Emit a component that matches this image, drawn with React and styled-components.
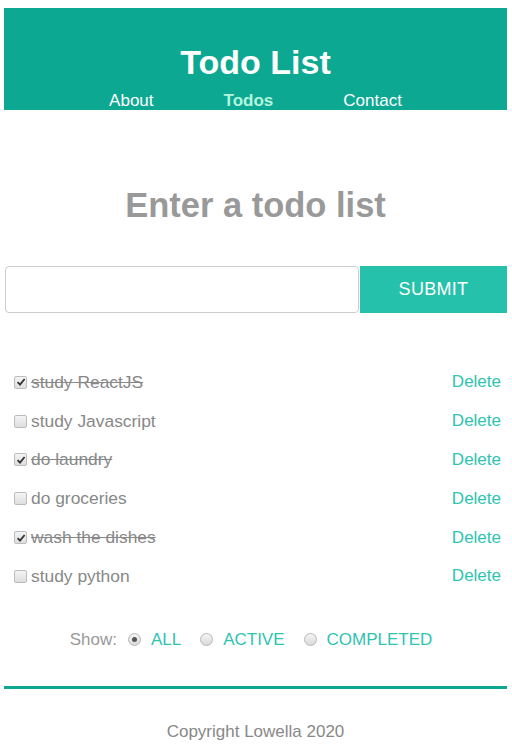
import React, { useState } from 'react';
import styled, { createGlobalStyle } from 'styled-components';

const GlobalStyle = createGlobalStyle`
  body {
    margin: 0;
    background: #fff;
    font-family: "Liberation Sans", Arial, sans-serif;
  }
`;

const Page = styled.div`
  padding: 8px 5px 0 4px;
`;

const Header = styled.header`
  height: 102px;
  background: #0ca892;
  display: flex;
  flex-direction: column;
  align-items: center;
`;

const Title = styled.h1`
  margin: 34px 0 0;
  font-size: 34px;
  line-height: 40px;
  font-weight: 700;
  color: #fff;
`;

const Nav = styled.nav`
  margin-top: 9px;
  display: flex;
  gap: 70px;
  > a {
    font-size: 17px;
    line-height: 20px;
    color: #fff;
    text-decoration: none;
  }
  > a.active {
    font-weight: 700;
    color: #b5f5dd;
  }
`;

const Heading = styled.h2`
  margin: 75px 0 0;
  text-align: center;
  font-size: 34.5px;
  line-height: 40px;
  font-weight: 700;
  color: #999;
`;

const Form = styled.form`
  margin-top: 41px;
  display: flex;
  height: 47px;
`;

const Input = styled.input`
  flex: 1;
  margin: 0 1px 0 1px;
  border: 1px solid #ccc;
  border-radius: 4px;
  font-size: 17px;
  padding: 0 10px;
  outline: none;
`;

const Submit = styled.button`
  width: 147px;
  border: none;
  background: #25c1aa;
  color: #fff;
  font-family: inherit;
  font-size: 18px;
  letter-spacing: 0.3px;
`;

const List = styled.ul`
  list-style: none;
  margin: 50px 0 0;
  padding: 0 6px 0 6px;
`;

const Row = styled.li`
  height: 38.8px;
  display: flex;
  align-items: center;
  font-size: 17.4px;
  color: #888;
`;

const Box = styled.span`
  width: 13px;
  height: 13px;
  margin: 0 4px 0 4px;
  box-sizing: border-box;
  border: 1px solid #bcbcbc;
  border-radius: 2px;
  background: linear-gradient(#f4f4f4, #dedede);
  display: flex;
  align-items: center;
  justify-content: center;
  flex-shrink: 0;
`;

const Label = styled.span`
  flex: 1;
  text-decoration: ${p => (p.$done ? 'line-through' : 'none')};
`;

const DeleteBtn = styled.span`
  color: #2ec4b0;
  font-size: 17px;
  cursor: pointer;
`;

const Filters = styled.div`
  margin-top: 34px;
  display: flex;
  justify-content: center;
  align-items: center;
  font-size: 17px;
  line-height: 20px;
  padding-right: 9px;
  > .show {
    color: #999;
    margin-right: 11px;
  }
`;

const Radio = styled.span`
  width: 13px;
  height: 13px;
  box-sizing: border-box;
  border-radius: 50%;
  border: 1px solid #b8b8b8;
  background: linear-gradient(#f4f4f4, #dadada);
  display: flex;
  align-items: center;
  justify-content: center;
  margin-right: 10px;
  > i {
    width: 5px;
    height: 5px;
    border-radius: 50%;
    background: #555;
  }
`;

const FilterLabel = styled.span`
  color: #2ec4b0;
  margin-right: 19px;
  &:last-child {
    margin-right: 0;
  }
`;

const Rule = styled.hr`
  margin: 36px 0 0;
  border: none;
  height: 3px;
  background: #0ca892;
`;

const Footer = styled.footer`
  margin-top: 33px;
  text-align: center;
  font-size: 17px;
  line-height: 20px;
  color: #888;
`;

const Check = () => (
  <svg width="10" height="10" viewBox="0 0 10 10">
    <path d="M1.6 5.2 L4 7.6 L8.6 2" fill="none" stroke="#333" strokeWidth="1.8" />
  </svg>
);

const todos = [
  { text: 'study ReactJS', done: true },
  { text: 'study Javascript', done: false },
  { text: 'do laundry', done: true },
  { text: 'do groceries', done: false },
  { text: 'wash the dishes', done: true },
  { text: 'study python', done: false },
];

const App = () => {
  const [filter] = useState('ALL');
  return (
    <Page>
      <GlobalStyle />
      <Header>
        <Title>Todo List</Title>
        <Nav>
          <a href="#about">About</a>
          <a href="#todos" className="active">Todos</a>
          <a href="#contact">Contact</a>
        </Nav>
      </Header>
      <Heading>Enter a todo list</Heading>
      <Form onSubmit={e => e.preventDefault()}>
        <Input type="text" />
        <Submit type="submit">SUBMIT</Submit>
      </Form>
      <List>
        {todos.map(t => (
          <Row key={t.text}>
            <Box>{t.done ? <Check /> : null}</Box>
            <Label $done={t.done}>{t.text}</Label>
            <DeleteBtn>Delete</DeleteBtn>
          </Row>
        ))}
      </List>
      <Filters>
        <span className="show">Show:</span>
        {['ALL', 'ACTIVE', 'COMPLETED'].map(f => (
          <React.Fragment key={f}>
            <Radio>{filter === f ? <i /> : null}</Radio>
            <FilterLabel>{f}</FilterLabel>
          </React.Fragment>
        ))}
      </Filters>
      <Rule />
      <Footer>Copyright Lowella 2020</Footer>
    </Page>
  );
};

export default App;
